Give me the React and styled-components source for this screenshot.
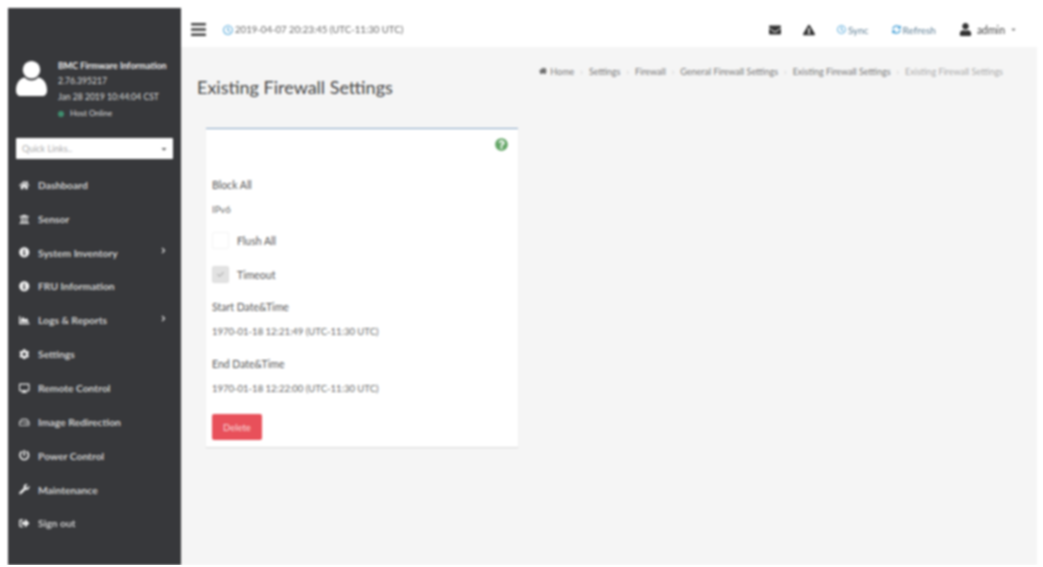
import React from 'react'
import styled, { createGlobalStyle } from 'styled-components'
import {
  FaHome, FaUniversity, FaInfoCircle, FaChartArea, FaCog, FaDesktop, FaRegHdd, FaPowerOff,
  FaWrench, FaSignOutAlt, FaEnvelope, FaExclamationTriangle, FaUser, FaQuestionCircle,
  FaAngleRight, FaCaretDown, FaBars, FaRegClock, FaSyncAlt, FaCheck,
} from 'react-icons/fa'

const GlobalStyle = createGlobalStyle`
  html, body {
    margin: 0;
    background: #fff;
    font-family: "Lato", "Liberation Sans", sans-serif;
  }
`

const menu = [
  { label: 'Dashboard', icon: <FaHome /> },
  { label: 'Sensor', icon: <FaUniversity /> },
  { label: 'System Inventory', icon: <FaInfoCircle />, sub: true },
  { label: 'FRU Information', icon: <FaInfoCircle /> },
  { label: 'Logs & Reports', icon: <FaChartArea />, sub: true },
  { label: 'Settings', icon: <FaCog /> },
  { label: 'Remote Control', icon: <FaDesktop /> },
  { label: 'Image Redirection', icon: <FaRegHdd /> },
  { label: 'Power Control', icon: <FaPowerOff /> },
  { label: 'Maintenance', icon: <FaWrench /> },
  { label: 'Sign out', icon: <FaSignOutAlt /> },
]

const crumbs = ['Home', 'Settings', 'Firewall', 'General Firewall Settings', 'Existing Firewall Settings']

const App = () => {
  return (
    <Page>
      <GlobalStyle />
      <Sidebar>
        <UserPanel>
          <Avatar viewBox="0 0 34 38">
            <circle cx="17" cy="10" r="9" fill="#fff" />
            <path d="M1 31c0-9 6-13 9-13 2 2 4 3 7 3s5-1 7-3c3 0 9 4 9 13 0 4-2 6-5 6H6c-3 0-5-2-5-6z" fill="#fff" />
          </Avatar>
          <UserInfo>
            <strong>BMC Firmware Information</strong>
            <span>2.76.395217</span>
            <span>Jan 28 2019 10:44:04 CST</span>
            <Status><i />Host Online</Status>
          </UserInfo>
        </UserPanel>
        <QuickLinks>
          <span>Quick Links..</span>
          <FaCaretDown />
        </QuickLinks>
        <Menu>
          {menu.map(({ label, icon, sub }) => (
            <MenuItem key={label}>
              <MenuIcon>{icon}</MenuIcon>
              <span>{label}</span>
              {sub ? <MenuArrow><FaAngleRight /></MenuArrow> : null}
            </MenuItem>
          ))}
        </Menu>
      </Sidebar>
      <Main>
        <Topbar>
          <Burger><FaBars /></Burger>
          <DateTime><FaRegClock />2019-04-07 20:23:45 (UTC-11:30 UTC)</DateTime>
          <TopActions>
            <TopIcon><FaEnvelope /></TopIcon>
            <TopIcon><FaExclamationTriangle /></TopIcon>
            <TopLink><FaRegClock />Sync</TopLink>
            <TopLink><FaSyncAlt />Refresh</TopLink>
            <UserMenu><FaUser />admin<FaCaretDown /></UserMenu>
          </TopActions>
        </Topbar>
        <Content>
          <Heading>
            <h1>Existing Firewall Settings</h1>
            <Breadcrumb>
              <FaHome />
              {crumbs.map(c => <Crumb key={c}>{c}</Crumb>)}
              <CrumbLast>Existing Firewall Settings</CrumbLast>
            </Breadcrumb>
          </Heading>
          <Card>
            <HelpRow><FaQuestionCircle /></HelpRow>
            <Label>Block All</Label>
            <Value $tight>IPv6</Value>
            <CheckRow>
              <CheckBox />
              <CheckLabel>Flush All</CheckLabel>
            </CheckRow>
            <CheckRow>
              <CheckBox $checked><FaCheck /></CheckBox>
              <CheckLabel>Timeout</CheckLabel>
            </CheckRow>
            <Label>Start Date&amp;Time</Label>
            <Value>1970-01-18 12:21:49 (UTC-11:30 UTC)</Value>
            <Label>End Date&amp;Time</Label>
            <Value>1970-01-18 12:22:00 (UTC-11:30 UTC)</Value>
            <DeleteButton>Delete</DeleteButton>
          </Card>
        </Content>
      </Main>
    </Page>
  )
}

const Page = styled.div`
  display: flex;
  width: 1029px;
  height: 557px;
  margin: 8px 0 0 8px;
  overflow: hidden;
  filter: blur(0.8px);
`

const Sidebar = styled.aside`
  flex: 0 0 173px;
  background: #37383b;
  color: #eee;
  padding-top: 50px;
  box-sizing: border-box;
`

const UserPanel = styled.div`
  display: flex;
  height: 80px;
`

const Avatar = styled.svg`
  width: 33px;
  height: 37px;
  margin: 2px 0 0 7px;
  flex: none;
`

const UserInfo = styled.div`
  margin-left: 10px;
  padding-top: 2px;
  display: flex;
  flex-direction: column;
  gap: 5px;
  font-size: 8.6px;
  line-height: 11px;
  white-space: nowrap;
  color: #ddd;
  strong {
    color: #eee;
    font-size: 8.9px;
  }
`

const Status = styled.span`
  display: flex;
  align-items: center;
  gap: 6px;
  font-size: 8px;
  i {
    width: 6px;
    height: 6px;
    border-radius: 50%;
    background: #3f8f6f;
  }
`

const QuickLinks = styled.div`
  display: flex;
  align-items: center;
  justify-content: space-between;
  height: 21px;
  margin: 0 8px;
  padding: 0 5px 0 6px;
  background: #fff;
  border-radius: 1px;
  font-size: 9px;
  color: #aaa;
  svg {
    color: #666;
    font-size: 8px;
  }
`

const Menu = styled.nav`
  display: flex;
  flex-direction: column;
  margin-top: 9px;
`

const MenuItem = styled.div`
  display: flex;
  align-items: center;
  height: 33.85px;
  padding-left: 11px;
  font-size: 10.3px;
  font-weight: 700;
  color: #d0d0d0;
`

const MenuIcon = styled.span`
  display: flex;
  justify-content: center;
  width: 11px;
  margin-right: 8px;
  font-size: 10.5px;
  color: #eee;
`

const MenuArrow = styled.span`
  display: flex;
  margin-left: auto;
  margin-right: 13px;
  font-size: 9px;
  position: relative;
  top: -2px;
`

const Main = styled.div`
  flex: 1;
  display: flex;
  flex-direction: column;
  min-width: 0;
`

const Topbar = styled.header`
  display: flex;
  align-items: center;
  height: 39px;
  flex: none;
  background: #fff;
  padding: 0 20px 0 9px;
  margin-top: 2px;
  margin-bottom: -2px;
`

const Burger = styled.span`
  display: flex;
  font-size: 17px;
  color: #444;
`

const DateTime = styled.span`
  display: flex;
  align-items: center;
  gap: 2px;
  margin-left: 16px;
  font-size: 9.6px;
  color: #666;
  svg {
    color: #4aa3d8;
    font-size: 10px;
  }
`

const TopActions = styled.div`
  display: flex;
  align-items: center;
  margin-left: auto;
`

const TopIcon = styled.span`
  display: flex;
  margin-right: 22px;
  font-size: 12px;
  color: #333;
`

const TopLink = styled.span`
  display: flex;
  align-items: center;
  gap: 2px;
  margin-right: 23px;
  font-size: 10px;
  color: #5f7f95;
  svg {
    color: #4aa3d8;
    font-size: 9px;
  }
`

const UserMenu = styled.span`
  display: flex;
  align-items: center;
  gap: 5px;
  font-size: 10.5px;
  color: #444;
  svg:first-child {
    font-size: 13px;
    color: #333;
  }
  svg:last-child {
    font-size: 7px;
    color: #666;
  }
`

const Content = styled.main`
  flex: 1;
  background: #f5f5f5;
  padding-left: 16px;
`

const Heading = styled.div`
  display: flex;
  justify-content: space-between;
  height: 81px;
  h1 {
    margin: 28px 0 0;
    font-size: 18px;
    font-weight: 400;
    line-height: 24px;
    color: #444;
  }
`

const Breadcrumb = styled.div`
  display: flex;
  align-items: center;
  gap: 6px;
  height: 12px;
  margin: 18px 34px 0 0;
  font-size: 9px;
  white-space: nowrap;
  color: #777;
  svg {
    font-size: 8px;
    color: #555;
    margin-right: -3px;
  }
`

const Crumb = styled.span`
  &::after {
    content: '›';
    margin-left: 6px;
    color: #ccc;
  }
`

const CrumbLast = styled.span`
  color: #aaa;
`

const Card = styled.section`
  width: 312px;
  height: 319px;
  margin-left: 9px;
  padding: 0 6px;
  box-sizing: border-box;
  background: #fff;
  border-top: 1px solid #7f9fc0;
  box-shadow: 0 1px 1px rgba(0, 0, 0, 0.1);
`

const HelpRow = styled.div`
  display: flex;
  justify-content: flex-end;
  height: 48px;
  padding: 9px 4px 0 0;
  box-sizing: border-box;
  font-size: 13px;
  color: #62a565;
`

const Label = styled.div`
  font-size: 10.5px;
  line-height: 14px;
  margin: 1px 0 11px;
  color: #555;
`

const Value = styled.div`
  font-size: 9.5px;
  line-height: 14px;
  margin-bottom: ${p => (p.$tight ? '15px' : '18px')};
  color: #666;
`

const CheckRow = styled.div`
  display: flex;
  align-items: center;
  height: 17px;
  margin-bottom: 17px;
`

const CheckBox = styled.span`
  display: flex;
  align-items: center;
  justify-content: center;
  width: 17px;
  height: 17px;
  box-sizing: border-box;
  margin-right: 8px;
  border: 1px solid ${p => (p.$checked ? '#ddd' : '#f3f3f3')};
  border-radius: 2px;
  background: ${p => (p.$checked ? '#e2e2e2' : '#fff')};
  svg {
    font-size: 7px;
    color: #bbb;
  }
`

const CheckLabel = styled.span`
  font-size: 10.5px;
  color: #555;
`

const DeleteButton = styled.button`
  display: block;
  width: 50px;
  height: 26px;
  padding: 0;
  border: none;
  border-radius: 2px;
  background: #e8505a;
  color: #fbdcdc;
  font-family: inherit;
  font-size: 9.5px;
`

export default App
